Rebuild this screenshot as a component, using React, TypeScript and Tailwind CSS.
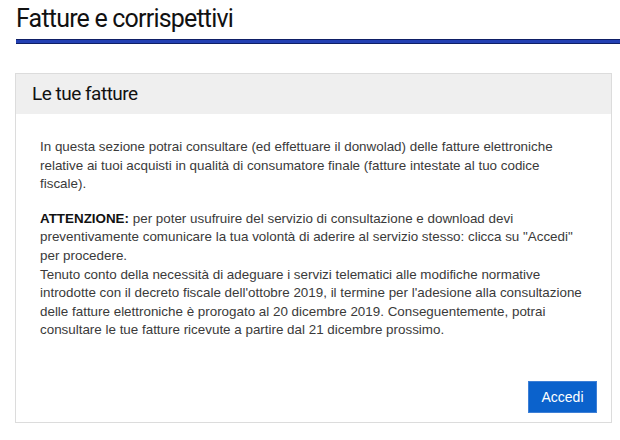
export default function App() {
  return (
    <div className="w-[620px] h-[440px] overflow-hidden bg-white pl-[15px]">
      <h1
        className="pl-[1px] pt-[3px] text-[25px] leading-[32px] text-[#111] tracking-[-0.8px]"
        style={{ fontFamily: 'Roboto, sans-serif' }}
      >
        Fatture e corrispettivi
      </h1>
      {/* double blue rule */}
      <div className="ml-[1px] mt-[4px] h-[5px] border-y border-[#0f1f66] bg-[#2340b3]" />

      <div className="mt-[29px] w-[597px] border border-[#dcdcdc]">
        <div
          className="flex h-[40px] items-center bg-[#efefef] px-[16px] text-[19px] text-[#111] tracking-[-0.5px]"
          style={{ fontFamily: 'Roboto, sans-serif' }}
        >
          Le tue fatture
        </div>
        <div
          className="px-[24px] pb-[9px] pt-[24px] text-[13.4px] leading-[18.6px] text-[#3a3a3a]"
          style={{ fontFamily: '"Liberation Sans", Arial, sans-serif' }}
        >
          <p>
            In questa sezione potrai consultare (ed effettuare il donwolad) delle fatture elettroniche
            <br />
            relative ai tuoi acquisti in qualità di consumatore finale (fatture intestate al tuo codice
            <br />
            fiscale).
          </p>
          <p className="mt-[16px]">
            <b className="text-[#111]">ATTENZIONE:</b> per poter usufruire del servizio di consultazione e download devi
            <br />
            preventivamente comunicare la tua volontà di aderire al servizio stesso: clicca su "Accedi"
            <br />
            per procedere.
            <br />
            Tenuto conto della necessità di adeguare i servizi telematici alle modifiche normative
            <br />
            introdotte con il decreto fiscale dell'ottobre 2019, il termine per l'adesione alla consultazione
            <br />
            delle fatture elettroniche è prorogato al 20 dicembre 2019. Conseguentemente, potrai
            <br />
            consultare le tue fatture ricevute a partire dal 21 dicembre prossimo.
          </p>
          <div className="mt-[41px] flex justify-end">
            <button className="mr-[-10px] h-[32px] w-[69px] border border-[#3d7fd6] bg-[#0b62cc] text-[14px] text-white">
              Accedi
            </button>
          </div>
        </div>
      </div>
    </div>
  );
}
